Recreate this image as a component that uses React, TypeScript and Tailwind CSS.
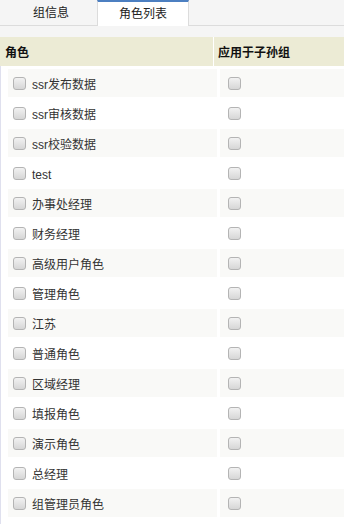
import React from "react";

const roles = [
  "ssr发布数据",
  "ssr审核数据",
  "ssr校验数据",
  "test",
  "办事处经理",
  "财务经理",
  "高级用户角色",
  "管理角色",
  "江苏",
  "普通角色",
  "区域经理",
  "填报角色",
  "演示角色",
  "总经理",
  "组管理员角色",
];

function Box() {
  return (
    <span className="block w-[13px] h-[13px] shrink-0 rounded-[3px] border border-[#b4b4b4] bg-gradient-to-b from-[#f2f2f2] to-[#d6d6d6]" />
  );
}

export default function App() {
  return (
    <div
      className="w-[344px] h-[524px] bg-white overflow-hidden text-[12px] text-[#333]"
      style={{ fontFamily: '"Liberation Sans", "Noto Sans CJK SC", sans-serif' }}
    >
      {/* tabs */}
      <div className="h-[26px] bg-[#f5f5f5] border-b border-[#dcdcdc] flex pl-[5px]">
        <div className="w-[92px] flex items-center justify-center pt-[1px] text-[#222]">组信息</div>
        <div className="w-[92px] h-[26px] bg-white border-t-2 border-t-[#4c7fc1] border-x border-x-[#dcdcdc] flex items-center justify-center text-[#222]">
          角色列表
        </div>
      </div>
      <div className="h-[11px] bg-[#f5f5f5]" />
      {/* header */}
      <div className="h-[29px] flex bg-[#eceBd5] text-[#111] font-bold">
        <div className="w-[214px] flex items-center pl-[5px] pt-[2px] border-r border-white">角色</div>
        <div className="flex-1 flex items-center pl-[4px] pt-[2px]">应用于子孙组</div>
      </div>
      {/* body */}
      <div className="border-l border-[#dfe0ee] h-full pl-[7px] pt-[3px] flex flex-col gap-[2px]">
        {roles.map((r, i) => {
          const bg = i % 2 === 0 ? "bg-[#f9f9f7]" : "bg-white";
          return (
            <div key={r} className="h-[28px] flex gap-[3px]">
              <div className={`w-[209px] flex items-center pl-[5px] gap-[6px] ${bg}`}>
                <Box />
                <span className="pt-[4px]">{r}</span>
              </div>
              <div className={`flex-1 flex items-center pl-[8px] ${bg}`}>
                <Box />
              </div>
            </div>
          );
        })}
      </div>
    </div>
  );
}
